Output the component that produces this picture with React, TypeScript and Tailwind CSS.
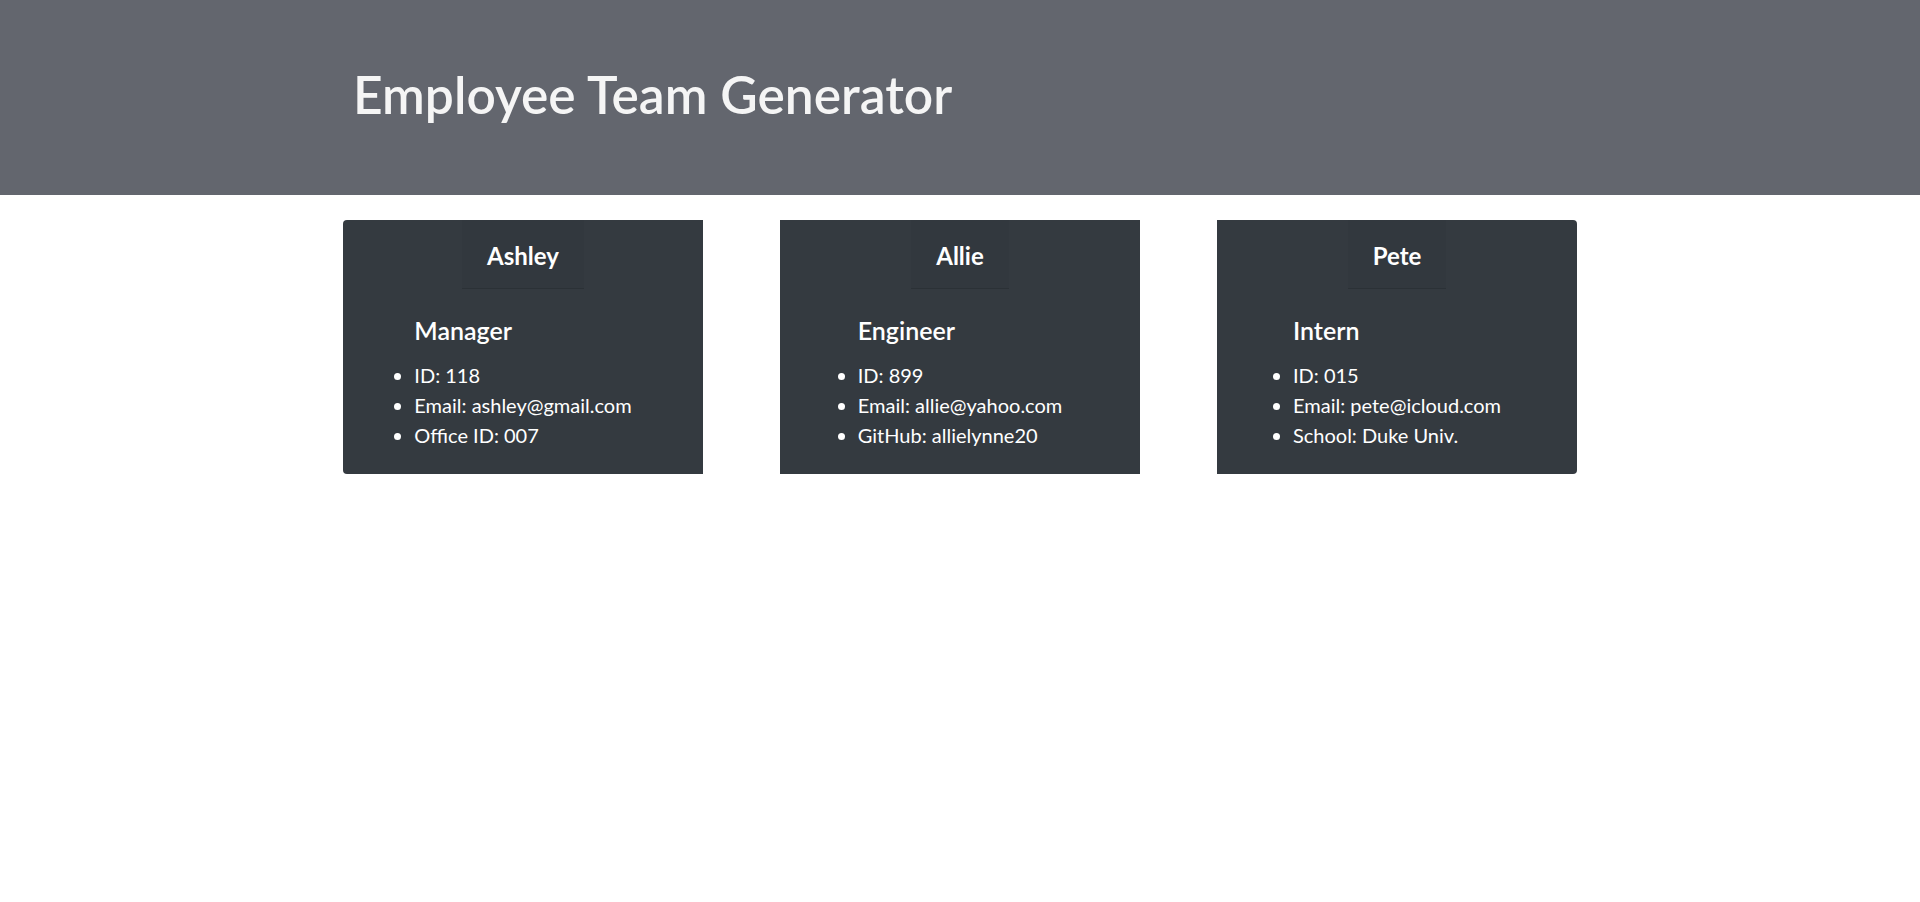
import React from "react";

type Emp = { name: string; role: string; items: string[]; rounded: string };

const emps: Emp[] = [
  { name: "Ashley", role: "Manager", items: ["ID: 118", "Email: ashley@gmail.com", "Office ID: 007"], rounded: "rounded-l-[4px]" },
  { name: "Allie", role: "Engineer", items: ["ID: 899", "Email: allie@yahoo.com", "GitHub: allielynne20"], rounded: "" },
  { name: "Pete", role: "Intern", items: ["ID: 015", "Email: pete@icloud.com", "School: Duke Univ."], rounded: "rounded-r-[4px]" },
];

function Card({ e }: { e: Emp }) {
  return (
    <div className={`w-[360px] h-[254px] bg-[#343a40] flex flex-col items-center text-white ${e.rounded}`}>
      <div className="h-[69px] px-[25px] flex items-center bg-[rgba(0,0,0,0.03)] border-b border-[rgba(0,0,0,0.125)]">
        <span className="text-[24px] font-bold leading-none pt-[3px]">{e.name}</span>
      </div>
      <div className="mt-[26px]">
        <h4 className="text-[25px] font-semibold leading-[1.2]">{e.role}</h4>
        <ul className="mt-[15px] list-disc text-[20px] leading-[30px]">
          {e.items.map((it) => (
            <li key={it}>{it}</li>
          ))}
        </ul>
      </div>
    </div>
  );
}

export default function App() {
  return (
    <div className="min-h-screen bg-white font-['Lato','Open_Sans',sans-serif]">
      <header className="h-[195px] bg-[#63666e] pl-[353px] pt-[64px]">
        <h1 className="text-[51.5px] font-semibold leading-[1.2] text-[#f5f5f5]">Employee Team Generator</h1>
      </header>
      <main className="mt-[25px] flex justify-center gap-[77px]">
        {emps.map((e) => (
          <Card key={e.name} e={e} />
        ))}
      </main>
    </div>
  );
}
